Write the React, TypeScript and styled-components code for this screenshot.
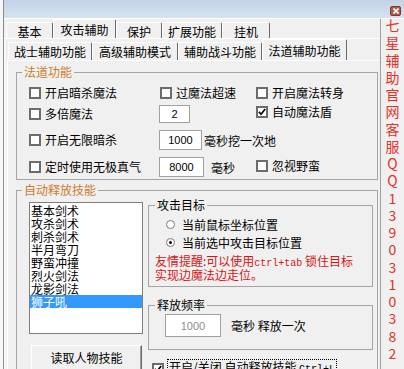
import styled, { createGlobalStyle } from "styled-components";

const GlobalStyle = createGlobalStyle`
  html, body {
    margin: 0;
    padding: 0;
    background: #f0f0f0;
  }
  body {
    font-family: "Noto Sans CJK SC", "Noto Sans", sans-serif;
    font-size: 12px;
    color: #000;
  }
  * {
    box-sizing: border-box;
  }
`;

const Window = styled.div`
  width: 404px;
  height: 369px;
  overflow: hidden;
  padding-left: 3px;
  background: #f7f7f7;
  display: flex;
`;

const Frame = styled.div`
  flex: 1;
  display: flex;
  flex-direction: column;
  border-left: 1px solid #8c8c8c;
  background: #f0f0f0;
  min-width: 0;
`;

const TitleBar = styled.div`
  height: 19px;
  flex-shrink: 0;
  display: flex;
  justify-content: flex-end;
  align-items: flex-start;
  padding: 6px 3px 0 0;
  background: linear-gradient(to bottom, #c3d2e6, #d6e2f0);
  border-bottom: 1px solid #fff;
`;

const CloseBtn = styled.div`
  width: 11px;
  height: 10px;
  background: #b05a4c;
  border: 1px solid #7e3a30;
  border-radius: 2px;
  display: flex;
  align-items: center;
  justify-content: center;
`;

const Body = styled.div`
  flex: 1;
  min-height: 0;
  display: flex;
`;

const Pane = styled.div`
  width: 377px;
  flex-shrink: 0;
  display: flex;
  flex-direction: column;
  border-right: 1px solid #a0a0a0;
  overflow: hidden;
`;

const TabRow = styled.div<{ $h: number; $indent: number }>`
  height: ${(p) => p.$h}px;
  flex-shrink: 0;
  display: flex;
  align-items: flex-end;
  padding-left: ${(p) => p.$indent}px;
`;

const Tab = styled.div<{ $w: number; $h: number; $pb: number }>`
  width: ${(p) => p.$w}px;
  height: ${(p) => p.$h}px;
  display: flex;
  align-items: flex-end;
  justify-content: center;
  padding-bottom: ${(p) => p.$pb}px;
  line-height: 12px;
  white-space: nowrap;
  border-top: 1px solid #fff;
  border-left: 1px solid #fff;
  border-right: 1px solid #696969;
  border-radius: 2px 2px 0 0;
  background: #f0f0f0;
`;

const OuterPage = styled.div`
  flex: 1;
  display: flex;
  flex-direction: column;
  border-top: 1px solid #fff;
  border-left: 1px solid #fff;
  padding: 0 1px 0 2px;
`;

const InnerPage = styled.div`
  display: flex;
  flex-direction: column;
  border-top: 1px solid #fff;
  border-left: 1px solid #fff;
  padding-left: 8px;
`;

const Group = styled.fieldset<{ $mt: number; $w: number }>`
  margin: ${(p) => p.$mt}px 0 0 0;
  padding: 0;
  width: ${(p) => p.$w}px;
  flex-shrink: 0;
  border: 1px solid #a5a5a5;
  min-width: 0;
`;

const Legend = styled.legend<{ $ml: number; $color?: string }>`
  margin-left: ${(p) => p.$ml}px;
  padding: 0 2px;
  line-height: 14px;
  font-size: 12px;
  color: ${(p) => p.$color ?? "#000"};
`;

const MagicGrid = styled.div`
  display: grid;
  grid-template-columns: 130px 97px 1fr;
  grid-template-rows: 20px 22px 30px 24px;
  align-items: center;
  padding: 4px 0 0 12px;
`;

const Cell = styled.div<{ $span?: number; $top?: number }>`
  display: flex;
  align-items: center;
  gap: 7px;
  white-space: nowrap;
  grid-column: ${(p) => (p.$span ? `span ${p.$span}` : "auto")};
  align-self: ${(p) => (p.$top !== undefined ? "start" : "center")};
  margin-top: ${(p) => p.$top ?? 0}px;
`;

const CheckLabel = styled.label<{ $pl?: number }>`
  display: flex;
  align-items: center;
  gap: 4px;
  padding-left: ${(p) => p.$pl ?? 0}px;
  white-space: nowrap;
  line-height: 14px;
`;

const Box = styled.span`
  width: 12px;
  height: 12px;
  flex-shrink: 0;
  border: 2px solid #6c6c6c;
  background: #fff;
  display: flex;
  align-items: center;
  justify-content: center;
`;

const Field = styled.div<{ $w: number; $h: number; $muted?: boolean }>`
  width: ${(p) => p.$w}px;
  height: ${(p) => p.$h}px;
  flex-shrink: 0;
  border: 1px solid #a0a0a0;
  background: #fff;
  display: flex;
  align-items: center;
  justify-content: center;
  font-family: "Liberation Sans", Arial, sans-serif;
  font-size: 11px;
  color: ${(p) => (p.$muted ? "#8c8c8c" : "#000")};
`;

const SkillArea = styled.div`
  display: grid;
  grid-template-columns: 114px 225px;
  column-gap: 5px;
  align-items: start;
  padding: 1px 0 0 12px;
`;

const LeftCol = styled.div`
  display: flex;
  flex-direction: column;
  margin-top: 4px;
`;

const SkillList = styled.div`
  width: 114px;
  height: 132px;
  border: 1px solid #7f7f7f;
  background: #fff;
  padding: 1px 0 0 0;
`;

const SkillItem = styled.div<{ $selected?: boolean }>`
  height: 13px;
  line-height: 13px;
  padding-left: 1px;
  white-space: nowrap;
  background: ${(p) => (p.$selected ? "#3399ff" : "transparent")};
  color: ${(p) => (p.$selected ? "#fff" : "#000")};
`;

const Button = styled.div`
  width: 111px;
  height: 27px;
  margin: 11px 0 0 2px;
  border-top: 1px solid #fff;
  border-left: 1px solid #fff;
  border-right: 1px solid #696969;
  border-bottom: 1px solid #696969;
  box-shadow: inset -1px -1px 0 #a0a0a0;
  display: flex;
  justify-content: center;
  line-height: 24px;
  font-size: 12px;
`;

const RightCol = styled.div`
  display: flex;
  flex-direction: column;
`;

const TargetBody = styled.div`
  padding: 3px 0 6px 6px;
`;

const RadioLabel = styled.div`
  height: 18px;
  display: flex;
  align-items: center;
  gap: 7px;
  padding-left: 11px;
  white-space: nowrap;
`;

const Radio = styled.span<{ $checked?: boolean }>`
  width: 9px;
  height: 9px;
  border-radius: 50%;
  border: 1px solid #7a7a7a;
  background: #fff;
  display: flex;
  align-items: center;
  justify-content: center;
  &::after {
    content: "";
    width: 3px;
    height: 3px;
    border-radius: 50%;
    background: ${(p) => (p.$checked ? "#000" : "transparent")};
  }
`;

const Hint = styled.div`
  margin-top: 4px;
  color: #d81414;
  font-size: 12px;
  line-height: 11px;
  white-space: nowrap;
`;

const Mono = styled.span<{ $size: number }>`
  font-family: "Liberation Mono", "DejaVu Sans Mono", monospace;
  font-size: ${(p) => p.$size}px;
`;

const FreqBody = styled.div`
  display: flex;
  align-items: center;
  gap: 10px;
  padding: 2px 0 12px 16px;
`;

const ToggleRow = styled.div`
  display: flex;
  align-items: center;
  gap: 3px;
  margin-top: 9px;
  padding-left: 4px;
`;

const Focus = styled.span`
  border: 1px dotted #000;
  padding: 0 1px;
  line-height: 14px;
  white-space: nowrap;
`;

const SideText = styled.div`
  flex: 1;
  display: flex;
  flex-direction: column;
  align-items: center;
  margin-top: -2px;
  color: #e5302a;
  font-size: 14px;
  line-height: 17.25px;
`;

function Check({ checked }: { checked?: boolean }) {
  return (
    <Box>
      {checked && (
        <svg width="8" height="8" viewBox="0 0 8 8">
          <path d="M0.8 3.8 L3 6.2 L7.2 1" fill="none" stroke="#000" strokeWidth="1.7" />
        </svg>
      )}
    </Box>
  );
}

const outerTabs = [
  { label: "基本", w: 47 },
  { label: "攻击辅助", w: 63, active: true },
  { label: "保护", w: 46 },
  { label: "扩展功能", w: 60 },
  { label: "挂机", w: 48 },
];

const innerTabs = [
  { label: "战士辅助功能", w: 84 },
  { label: "高级辅助模式", w: 86 },
  { label: "辅助战斗功能", w: 84 },
  { label: "法道辅助功能", w: 85, active: true },
];

const skills = ["基本剑术", "攻杀剑术", "刺杀剑术", "半月弯刀", "野蛮冲撞", "烈火剑法", "龙影剑法", "狮子吼"];

const sideChars = "七星辅助官网客服QQ1390310382".split("");

export default function App() {
  return (
    <>
      <GlobalStyle />
      <Window>
        <Frame>
          <TitleBar>
            <CloseBtn>
              <svg width="6" height="6" viewBox="0 0 6 6">
                <path d="M0.5 0.5 L5.5 5.5 M5.5 0.5 L0.5 5.5" stroke="#fff" strokeWidth="1.6" />
              </svg>
            </CloseBtn>
          </TitleBar>
          <Body>
            <Pane>
              <TabRow $h={19} $indent={2}>
                {outerTabs.map((t) => (
                  <Tab key={t.label} $w={t.w} $h={t.active ? 19 : 16} $pb={t.active ? 2 : 0}>
                    {t.label}
                  </Tab>
                ))}
              </TabRow>
              <OuterPage>
                <TabRow $h={21} $indent={1}>
                  {innerTabs.map((t) => (
                    <Tab key={t.label} $w={t.w} $h={t.active ? 21 : 18} $pb={t.active ? 3 : 2}>
                      {t.label}
                    </Tab>
                  ))}
                </TabRow>
                <InnerPage>
                  <Group $mt={4} $w={362}>
                    <Legend $ml={5} $color="#d07a2c">法道功能</Legend>
                    <MagicGrid>
                      <Cell>
                        <CheckLabel><Check />开启暗杀魔法</CheckLabel>
                      </Cell>
                      <Cell>
                        <CheckLabel $pl={1}><Check />过魔法超速</CheckLabel>
                      </Cell>
                      <Cell>
                        <CheckLabel><Check />开启魔法转身</CheckLabel>
                      </Cell>

                      <Cell>
                        <CheckLabel><Check />多倍魔法</CheckLabel>
                      </Cell>
                      <Cell>
                        <Field $w={31} $h={18}>2</Field>
                      </Cell>
                      <Cell $top={2}>
                        <CheckLabel><Check checked />自动魔法盾</CheckLabel>
                      </Cell>

                      <Cell>
                        <CheckLabel><Check />开启无限暗杀</CheckLabel>
                      </Cell>
                      <Cell $span={2} style={{ gap: 2 }}>
                        <Field $w={43} $h={20}>1000</Field>
                        毫秒挖一次地
                      </Cell>

                      <Cell>
                        <CheckLabel><Check />定时使用无极真气</CheckLabel>
                      </Cell>
                      <Cell>
                        <Field $w={45} $h={20}>8000</Field>
                        毫秒
                      </Cell>
                      <Cell $top={4}>
                        <CheckLabel><Check />忽视野蛮</CheckLabel>
                      </Cell>
                    </MagicGrid>
                  </Group>

                  <Group $mt={3} $w={362}>
                    <Legend $ml={5} $color="#d07a2c">自动释放技能</Legend>
                    <SkillArea>
                      <LeftCol>
                        <SkillList>
                          {skills.map((s, i) => (
                            <SkillItem key={s} $selected={i === skills.length - 1}>
                              {s}
                            </SkillItem>
                          ))}
                        </SkillList>
                        <Button>读取人物技能</Button>
                      </LeftCol>
                      <RightCol>
                        <Group $mt={0} $w={225}>
                          <Legend $ml={6}>攻击目标</Legend>
                          <TargetBody>
                            <RadioLabel><Radio />当前鼠标坐标位置</RadioLabel>
                            <RadioLabel><Radio $checked />当前选中攻击目标位置</RadioLabel>
                            <Hint>
                              友情提醒:可以使用<Mono $size={10}>ctrl+tab</Mono> 锁住目标
                              <br />
                              实现边魔法边走位。
                            </Hint>
                          </TargetBody>
                        </Group>
                        <Group $mt={11} $w={225}>
                          <Legend $ml={6}>释放频率</Legend>
                          <FreqBody>
                            <Field $w={56} $h={23} $muted>1000</Field>
                            毫秒 释放一次
                          </FreqBody>
                        </Group>
                        <ToggleRow>
                          <Check checked />
                          <Focus>
                            开启/关闭 自动释放技能 <Mono $size={10}>Ctrl+L</Mono>
                          </Focus>
                        </ToggleRow>
                      </RightCol>
                    </SkillArea>
                  </Group>
                </InnerPage>
              </OuterPage>
            </Pane>
            <SideText>
              {sideChars.map((c, i) => (
                <span key={i}>{c}</span>
              ))}
            </SideText>
          </Body>
        </Frame>
      </Window>
    </>
  );
}
